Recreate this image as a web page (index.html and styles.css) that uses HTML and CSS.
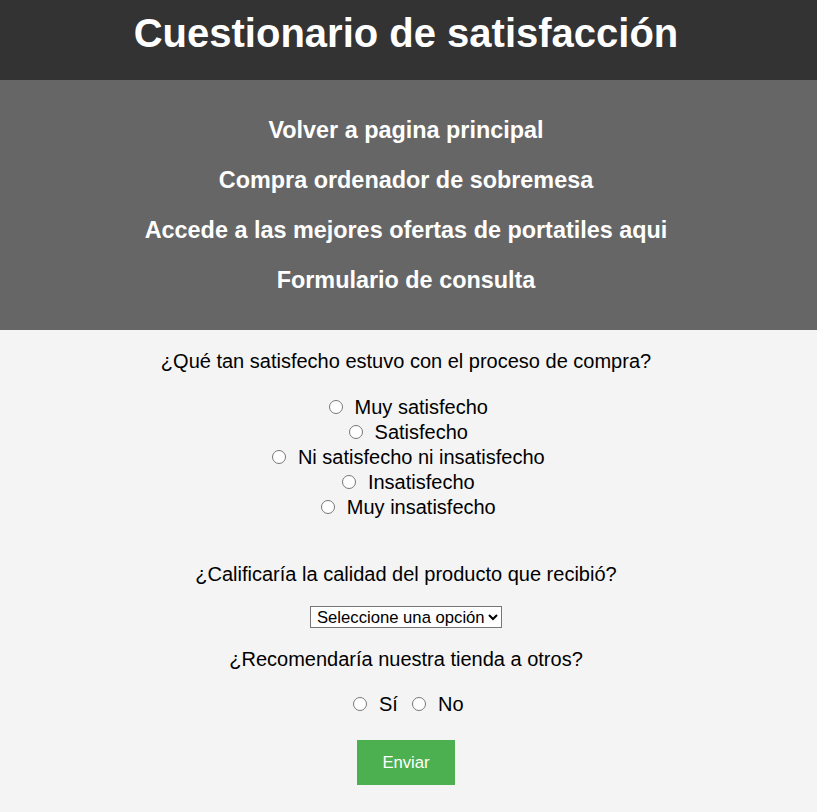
FILE: index.html
```html
<!DOCTYPE html>
<html lang="es">
<head>
<meta charset="utf-8">
<title>Cuestionario de satisfacción</title>
<link rel="stylesheet" href="styles.css">
</head>
<body>
<header class="site-header">
  <h1 class="site-title">Cuestionario de satisfacción</h1>
</header>
<nav class="site-nav">
  <a class="nav-link" href="#">Volver a pagina principal</a>
  <a class="nav-link" href="#">Compra ordenador de sobremesa</a>
  <a class="nav-link" href="#">Accede a las mejores ofertas de portatiles aqui</a>
  <a class="nav-link" href="#">Formulario de consulta</a>
</nav>
<main class="survey">
  <form class="survey-form">
    <p class="question q-first">¿Qué tan satisfecho estuvo con el proceso de compra?</p>
    <div class="options">
      <label class="option"><input type="radio" name="proceso" class="radio"> Muy satisfecho</label>
      <label class="option"><input type="radio" name="proceso" class="radio"> Satisfecho</label>
      <label class="option"><input type="radio" name="proceso" class="radio"> Ni satisfecho ni insatisfecho</label>
      <label class="option"><input type="radio" name="proceso" class="radio"> Insatisfecho</label>
      <label class="option"><input type="radio" name="proceso" class="radio"> Muy insatisfecho</label>
    </div>
    <p class="question q-second">¿Calificaría la calidad del producto que recibió?</p>
    <div class="select-row">
      <select class="select">
        <option>Seleccione una opción</option>
        <option>Excelente</option>
        <option>Buena</option>
        <option>Regular</option>
        <option>Mala</option>
      </select>
    </div>
    <p class="question q-third">¿Recomendaría nuestra tienda a otros?</p>
    <div class="inline-options">
      <label class="inline-option"><input type="radio" name="recomienda" class="radio"> Sí</label>
      <label class="inline-option"><input type="radio" name="recomienda" class="radio"> No</label>
    </div>
    <div class="submit-row">
      <button type="submit" class="submit">Enviar</button>
    </div>
  </form>
</main>
</body>
</html>
```

FILE: styles.css
```css
html, body {
  margin: 0;
  padding: 0;
}
body {
  background: #f4f4f4;
  font-family: "Liberation Sans", Arial, sans-serif;
  font-size: 20px;
  color: #000;
}
.site-header {
  background: #333333;
  color: #fff;
  text-align: center;
  padding: 10px 5px 24px 0;
}
.site-title {
  margin: 0;
  font-size: 2em;
  font-weight: bold;
  line-height: 46px;
}
.site-nav {
  background: #666666;
  padding: 25px 5px 25px 0;
  display: flex;
  flex-direction: column;
  align-items: center;
}
.nav-link {
  display: block;
  color: #fff;
  text-decoration: none;
  font-weight: bold;
  font-size: 1.17em;
  height: 50px;
  line-height: 50px;
}
.survey {
  text-align: center;
  padding: 20px 5px 0 0;
}
.survey-form {
  margin: 0;
}
.question {
  margin: 0;
  line-height: 23px;
}
.options {
  margin-top: 22px;
  display: flex;
  flex-direction: column;
  align-items: center;
  line-height: 25px;
}
.option {
  display: block;
}
.radio {
  margin: 3px 6px 0 5px;
  width: 14px;
  height: 14px;
}
.q-second {
  margin-top: 43px;
}
.select-row {
  margin-top: 20px;
  line-height: 22px;
}
.select {
  font-family: "Liberation Sans", Arial, sans-serif;
  font-size: 16.67px;
  height: 22px;
  padding: 0 0 0 2px;
  border: 1px solid #767676;
  border-radius: 0;
  background: #fff;
  color: #000;
  vertical-align: top;
}
.q-third {
  margin-top: 20px;
}
.inline-options {
  margin-top: 22px;
  line-height: 23px;
}
.inline-option {
  margin: 0 2px;
}
.submit-row {
  margin-top: 24px;
  padding-bottom: 27px;
}
.submit {
  background: #4caf50;
  color: #fff;
  border: none;
  font-family: "Liberation Sans", Arial, sans-serif;
  font-size: 16.67px;
  line-height: 19px;
  padding: 13px 25px;
  cursor: pointer;
}
```
